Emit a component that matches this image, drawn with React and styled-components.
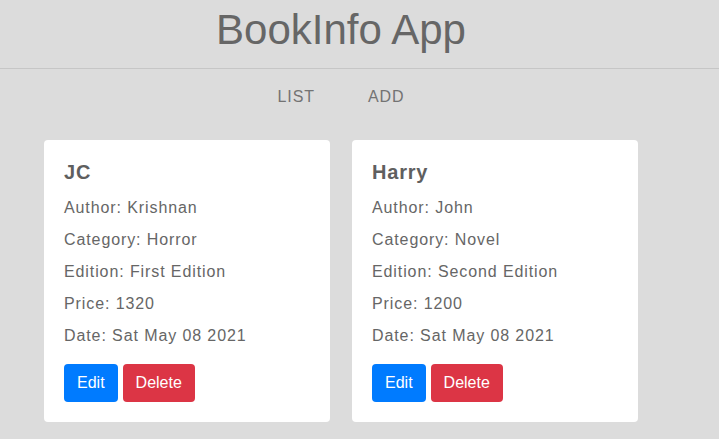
import React from "react";
import styled, { createGlobalStyle } from "styled-components";

const Global = createGlobalStyle`
  html, body { margin: 0; padding: 0; background: #dcdcdc; }
  body { font-family: "Liberation Sans", Arial, sans-serif; color: #666; }
`;

const Header = styled.header`
  border-bottom: 1px solid #c6c6c6;
  padding: 6px 0 14px;
`;

const Title = styled.h1`
  width: 682px;
  margin: 0;
  text-align: center;
  font-size: 42px;
  font-weight: 400;
  line-height: 48px;
  color: #666;
`;

const Nav = styled.nav`
  width: 682px;
  display: flex;
  justify-content: center;
  gap: 53px;
  margin-top: 19px;
`;

const NavLink = styled.a`
  font-size: 16px;
  line-height: 18px;
  letter-spacing: 0.9px;
  color: #737373;
  text-decoration: none;
  text-transform: uppercase;
`;

const Cards = styled.main`
  width: 682px;
  display: flex;
  justify-content: center;
  gap: 22px;
  margin-top: 34px;
`;

const Card = styled.article`
  width: 286px;
  box-sizing: border-box;
  background: #fff;
  border-radius: 4px;
  padding: 21px 20px 20px;
`;

const CardTitle = styled.h2`
  margin: 0 0 8px;
  font-size: 20px;
  line-height: 23px;
  font-weight: 700;
  letter-spacing: 0.8px;
  color: #5f5f5f;
`;

const Line = styled.div`
  font-size: 16px;
  line-height: 32px;
  letter-spacing: 0.9px;
  color: #666;
`;

const Actions = styled.div`
  display: flex;
  gap: 5px;
  margin-top: 12px;
`;

const Button = styled.button`
  font-family: "Liberation Sans", Arial, sans-serif;
  font-size: 16px;
  line-height: 18px;
  padding: 10px 13px;
  border: none;
  border-radius: 4px;
  color: #fff;
  background: ${(p) => (p.$variant === "danger" ? "#dc3545" : "#007bff")};
  cursor: pointer;
`;

const books = [
  { title: "JC", author: "Krishnan", category: "Horror", edition: "First Edition", price: 1320, date: "Sat May 08 2021" },
  { title: "Harry", author: "John", category: "Novel", edition: "Second Edition", price: 1200, date: "Sat May 08 2021" },
];

export default function App() {
  return (
    <>
      <Global />
      <Header>
        <Title>BookInfo App</Title>
      </Header>
      <Nav>
        <NavLink href="#">List</NavLink>
        <NavLink href="#">Add</NavLink>
      </Nav>
      <Cards>
        {books.map((b) => (
          <Card key={b.title}>
            <CardTitle>{b.title}</CardTitle>
            <Line>Author: {b.author}</Line>
            <Line>Category: {b.category}</Line>
            <Line>Edition: {b.edition}</Line>
            <Line>Price: {b.price}</Line>
            <Line>Date: {b.date}</Line>
            <Actions>
              <Button>Edit</Button>
              <Button $variant="danger">Delete</Button>
            </Actions>
          </Card>
        ))}
      </Cards>
    </>
  );
}
